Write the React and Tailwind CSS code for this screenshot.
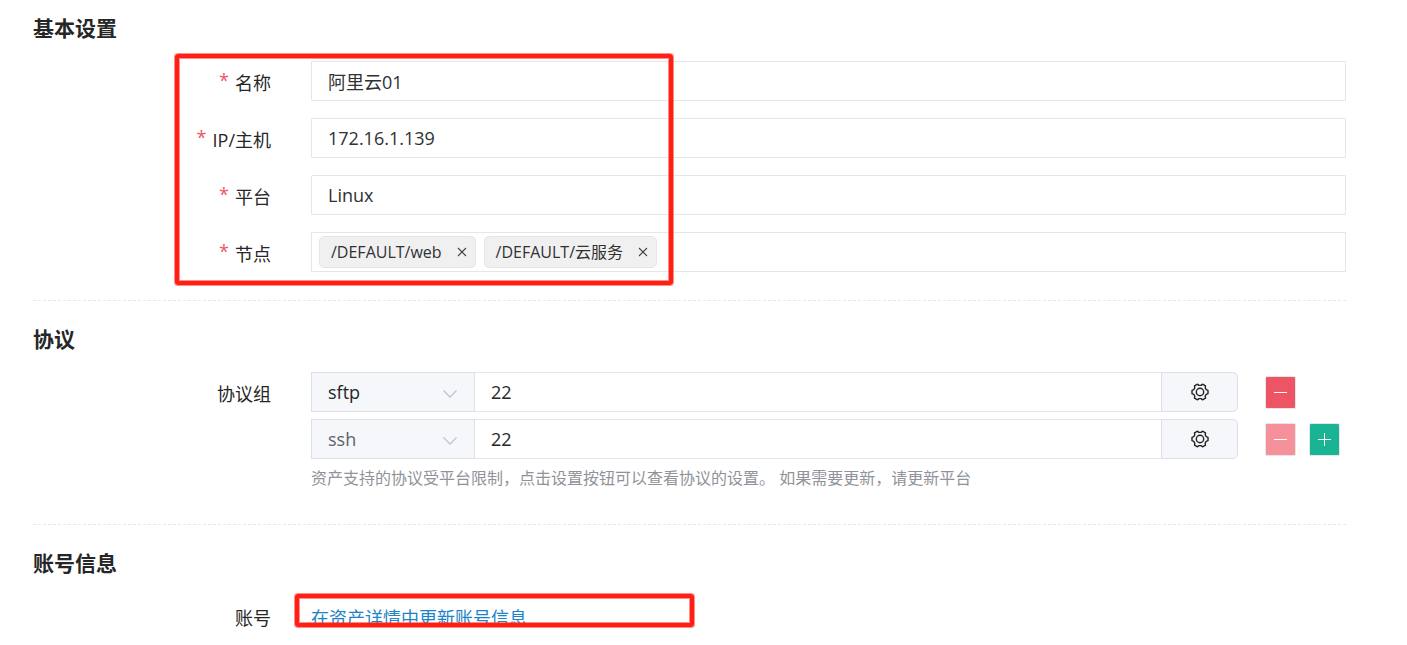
import { useState } from "react";

function Section({ title, divided, children }) {
  return (
    <section className={divided ? "mt-6 border-t border-dashed border-[#e7e7e7] pt-[22px]" : ""}>
      <h3 className="text-[21px] leading-8 font-bold text-[#262626]">{title}</h3>
      <div className="mt-[17px] flex flex-col gap-[13px]">{children}</div>
    </section>
  );
}

function Row({ label, htmlFor, required, children }) {
  return (
    <div className="flex items-start">
      <label htmlFor={htmlFor} className="w-[278px] shrink-0 pr-10 text-right leading-[44px] text-[#262626]">
        {required && <span className="mr-1.5 align-[3px] leading-none text-[#ed5565]">*</span>}
        {label}
      </label>
      <div className="min-w-0 flex-1">{children}</div>
    </div>
  );
}

function TextField({ id, value }) {
  return (
    <input
      id={id}
      type="text"
      defaultValue={value}
      className="block h-10 w-full rounded-[1px] border border-[#e5e6e7] bg-white px-4 text-[#303133] outline-none"
    />
  );
}

function Tag({ text, onRemove }) {
  return (
    <span className="flex h-8 items-center gap-[15px] rounded-[5px] border border-[#e6e6e6] bg-[#f0f0f0] pr-2 pl-[11px] text-base text-[#303133]">
      {text}
      <button type="button" aria-label={"移除 " + text} onClick={onRemove} className="flex size-2.5 items-center justify-center">
        <svg viewBox="0 0 10 10" className="size-2.5" fill="none" stroke="#444" strokeWidth="1.1">
          <path d="M1 1l8 8M9 1l-8 8" />
        </svg>
      </button>
    </span>
  );
}

function GearIcon() {
  return (
    <svg viewBox="0 0 18 18" className="size-[18px]" fill="none" stroke="#222" strokeWidth="1.4" strokeLinejoin="round">
      <path d="M17 7.3V10.7L15.25 11.4 14.2 13.2 14.5 15.1 11.5 16.8 10.05 15.6H7.95L6.5 16.8 3.5 15.1 3.8 13.2 2.75 11.4 1 10.7V7.3L2.75 6.6 3.8 4.8 3.5 2.9 6.5 1.2 7.95 2.4H10.05L11.5 1.2 14.5 2.9 14.2 4.8 15.25 6.6Z" />
      <circle cx="9" cy="9" r="3.7" />
    </svg>
  );
}

function ProtocolRow({ id, name, locked, canAdd }) {
  return (
    <div className="flex h-10 items-center">
      <div className="flex h-10 min-w-0 flex-1">
        <div className="relative w-[164px] shrink-0">
          <select
            id={id}
            aria-label="协议"
            defaultValue={name}
            className={"h-full w-full appearance-none border border-[#dcdfe6] bg-[#f5f7fa] px-4 outline-none " + (locked ? "text-[#606266]" : "text-[#262626]")}
          >
            <option>sftp</option>
            <option>ssh</option>
          </select>
          <svg viewBox="0 0 14 8" className="pointer-events-none absolute top-[18px] right-[18px] h-2 w-3.5" fill="none" stroke="#c0c4cc" strokeWidth="1.3">
            <path d="M.5.5 7 7 13.5.5" />
          </svg>
        </div>
        <input
          type="text"
          aria-label="端口"
          defaultValue="22"
          className="min-w-0 flex-1 border-y border-[#e5e6e7] bg-white px-4 text-[#262626] outline-none"
        />
        <button type="button" aria-label="设置" className="flex w-[77px] items-center justify-center rounded-r-[5px] border border-[#dcdfe6] bg-[#f5f7fa]">
          <GearIcon />
        </button>
      </div>
      <div className="flex w-[108px] shrink-0 gap-[13px] pl-[27px]">
        <button
          type="button"
          aria-label="删除"
          disabled={locked}
          className={"flex h-[33px] w-[31px] items-center justify-center rounded-[2px] border border-[#e5e6e7] " + (locked ? "bg-[#f6919b]" : "bg-[#ed5565]")}
        >
          <svg viewBox="0 0 13 13" className="size-[13px]" stroke="#fff" strokeWidth="1">
            <path d="M0 6.5h13" />
          </svg>
        </button>
        {canAdd && (
          <button type="button" aria-label="添加" className="flex h-[33px] w-[31px] items-center justify-center rounded-[2px] border border-[#e5e6e7] bg-[#1ab394]">
            <svg viewBox="0 0 13 13" className="size-[13px]" stroke="#fff" strokeWidth="1">
              <path d="M0 6.5h13M6.5 0v13" />
            </svg>
          </button>
        )}
      </div>
    </div>
  );
}

function Highlight({ className }) {
  return (
    <div
      className={
        "pointer-events-none absolute rounded-[3px] border-4 border-[#ff1f14] shadow-[0_0_0_1px_rgba(255,31,20,0.5),inset_0_0_0_1px_rgba(255,31,20,0.5)] " +
        className
      }
    />
  );
}

export default function App() {
  const [nodes, setNodes] = useState(["/DEFAULT/web", "/DEFAULT/云服务"]);

  return (
    <main className="relative bg-white pt-3 pr-[61px] pb-1 pl-[33px] font-['Open_Sans','Noto_Sans_CJK_SC',sans-serif] text-lg">
      <form>
        <Section title="基本设置">
          <Row label="名称" htmlFor="name" required>
            <TextField id="name" value="阿里云01" />
          </Row>
          <Row label="IP/主机" htmlFor="address" required>
            <TextField id="address" value="172.16.1.139" />
          </Row>
          <Row label="平台" htmlFor="platform" required>
            <TextField id="platform" value="Linux" />
          </Row>
          <Row label="节点" htmlFor="nodes" required>
            <div className="flex h-10 items-center gap-2 border border-[#e5e6e7] pl-[7px]">
              {nodes.map((node) => (
                <Tag key={node} text={node} onRemove={() => setNodes(nodes.filter((n) => n !== node))} />
              ))}
              <input id="nodes" type="text" className="min-w-0 flex-1 outline-none" />
            </div>
          </Row>
        </Section>

        <Section title="协议" divided>
          <Row label="协议组" htmlFor="protocol-sftp">
            <div className="flex flex-col gap-[7px]">
              <ProtocolRow id="protocol-sftp" name="sftp" />
              <ProtocolRow id="protocol-ssh" name="ssh" locked canAdd />
            </div>
            <p className="mt-[7px] mb-2.5 text-base leading-6 text-[#909399]">
              资产支持的协议受平台限制，点击设置按钮可以查看协议的设置。 如果需要更新，请更新平台
            </p>
          </Row>
        </Section>

        <Section title="账号信息" divided>
          <Row label="账号" htmlFor="account-link">
            <a id="account-link" href="#accounts" className="leading-[44px] text-[#1c84c6]">
              在资产详情中更新账号信息
            </a>
          </Row>
        </Section>
      </form>

      <Highlight className="top-[54px] left-[175px] h-[231px] w-[498px]" />
      <Highlight className="top-[594px] left-[295px] h-[33px] w-[399px]" />
    </main>
  );
}
